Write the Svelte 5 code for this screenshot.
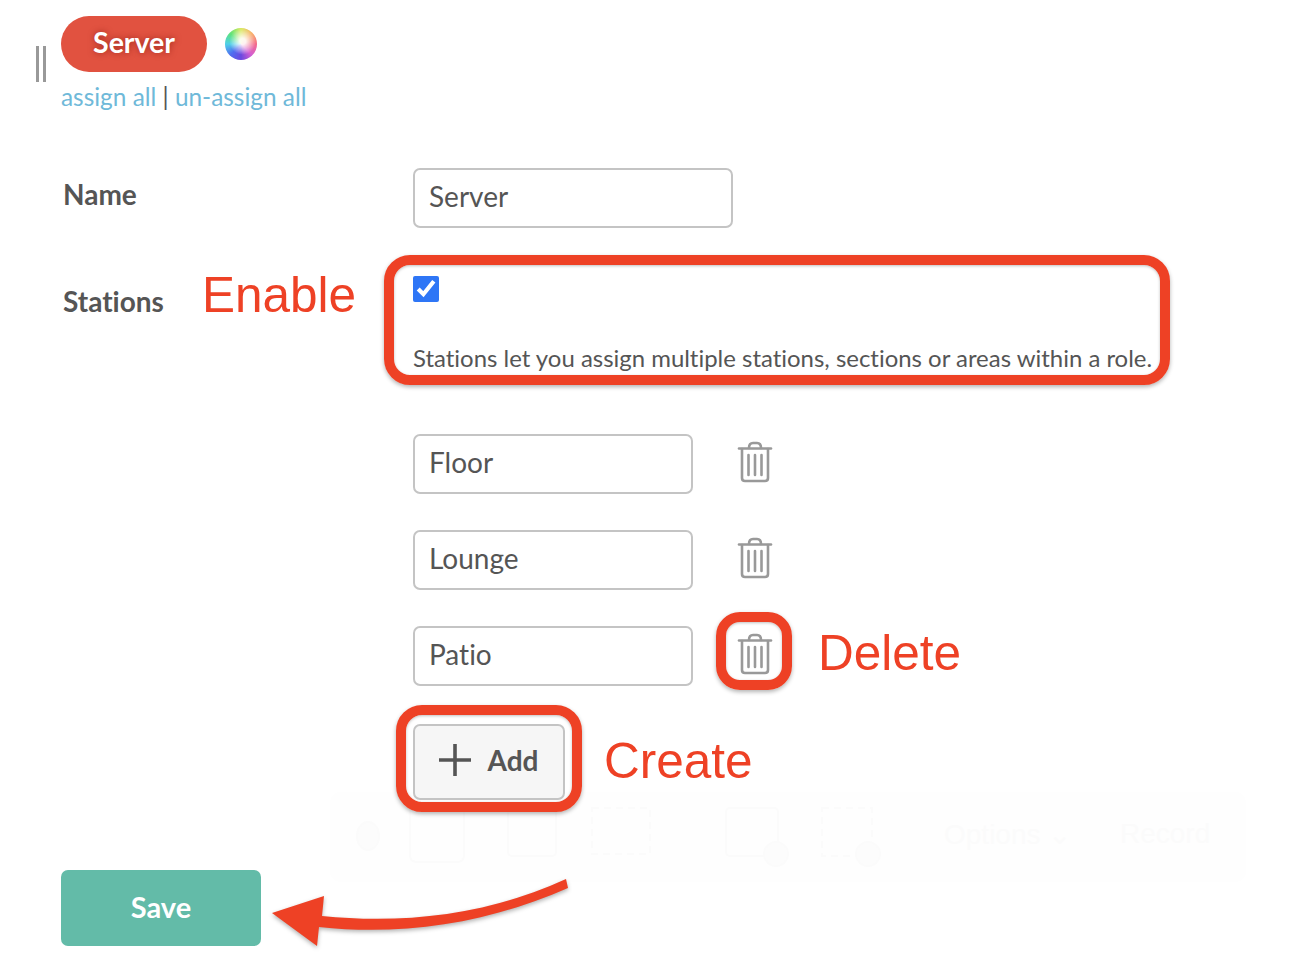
<script>
  const stations = ["Floor", "Lounge", "Patio"];
</script>

<main class="page">
  <span class="grip" aria-hidden="true"></span>

  <div class="role-head">
    <span class="pill">Server</span>
    <span class="swatch" aria-hidden="true"></span>
  </div>
  <p class="assign"><a href="#a">assign all</a> <span>|</span> <a href="#u">un-assign all</a></p>

  <form class="form">
    <label class="field-label name-label" for="role-name">Name</label>
    <input id="role-name" class="text-input role-input" type="text" value="Server" />

    <span class="field-label stations-label">Stations</span>
    <div class="stations">
      <input class="check" type="checkbox" checked aria-label="Enable stations" />
      <p class="help">Stations let you assign multiple stations, sections or areas within a role.</p>

      <div class="station-list">
        {#each stations as station}
          <div class="station-row">
            <input class="text-input station-input" type="text" value={station} />
            <button class="trash" type="button" aria-label="Delete {station}">
              <svg width="36" height="42" viewBox="0 0 36 42" fill="none" stroke="#999" stroke-width="2.6" stroke-linecap="round" stroke-linejoin="round">
                <path d="M2 7.5h32" />
                <path d="M12 7c0-3.5 1.500-5 4-5h4c2.500 0 4 1.500 4 5" />
                <path d="M5 8v29c0 2 1 3 3 3h20c2 0 3-1 3-3V8" />
                <path d="M11.500 14v20M18 14v20M24.500 14v20" />
              </svg>
            </button>
          </div>
        {/each}
      </div>

      <button class="add" type="button">
        <svg width="34" height="34" viewBox="0 0 34 34" stroke="#555" stroke-width="3.600"><path d="M17 1v32M1 17h32" /></svg>
        <span>Add</span>
      </button>
    </div>
  </form>

  <button class="save" type="button">Save</button>

  <!-- screen recorder toolbar, nearly invisible behind the screenshot -->
  <div class="ghost-bar" aria-hidden="true">
    <svg width="920" height="90" viewBox="0 0 920 90" fill="none" stroke="#fbfbfb" stroke-width="2">
      <ellipse cx="38" cy="44" rx="11" ry="14" fill="#fcfcfc" />
      <rect x="80" y="12" width="54" height="58" rx="6" />
      <rect x="178" y="18" width="48" height="46" rx="4" />
      <rect x="262" y="16" width="58" height="46" stroke-dasharray="7 5" />
      <rect x="396" y="16" width="52" height="48" rx="4" />
      <circle cx="446" cy="62" r="12" fill="#fcfcfc" />
      <rect x="492" y="16" width="50" height="48" stroke-dasharray="7 5" />
      <circle cx="538" cy="62" r="12" fill="#fcfcfc" />
    </svg>
    <span class="ghost-options">Options ⌄</span>
    <span class="ghost-record">Record</span>
  </div>

  <!-- annotations drawn on top of the screenshot -->
  <span class="ring ring-enable"></span>
  <span class="ring ring-delete"></span>
  <span class="ring ring-add"></span>
  <span class="note note-enable">Enable</span>
  <span class="note note-delete">Delete</span>
  <span class="note note-create">Create</span>

  <svg class="arrow" width="310" height="80" viewBox="0 0 310 80">
    <path d="M51 41 C130 49 215 41 295 4 L297 13 C215 49 130 61 48 52 L46 71 L1 38 L53 21 Z" fill="#ee4125" />
  </svg>
</main>

<style>
  :global(body) {
    margin: 0;
    background: #fff;
  }

  .page {
    position: relative;
    box-sizing: border-box;
    height: 970px;
    padding: 16px 0 0 61px;
    overflow: hidden;
    color: #555;
    font-family: Lato, "Liberation Sans", sans-serif;
    font-variant-ligatures: none;
  }

  .grip {
    position: absolute;
    top: 46px;
    left: 36px;
    box-sizing: content-box;
    width: 4px;
    height: 36px;
    border-right: 3px solid #999;
    border-left: 3px solid #999;
  }

  .role-head {
    display: flex;
    align-items: center;
    gap: 18px;
  }

  .pill {
    display: grid;
    box-sizing: border-box;
    width: 146px;
    height: 56px;
    padding-bottom: 4px;
    place-items: center;
    border-radius: 28px;
    color: #fff;
    background: #e15240;
    font-size: 28.5px;
    font-weight: 700;
    text-shadow: 0 0 6px rgba(120, 20, 10, 0.6);
  }

  .swatch {
    width: 32px;
    height: 32px;
    border-radius: 50%;
    background:
      radial-gradient(circle at 55% 42%, rgba(255, 255, 255, 0.9) 0 12%, rgba(255, 255, 255, 0) 52%),
      conic-gradient(#d8e85a, #f7a95a, #f46a8a, #d55fd0, #6a48e0, #4f6ff0, #4fd0e8, #5fe37a, #d8e85a);
    filter: blur(0.5px);
  }

  .assign {
    margin: 11px 0 0;
    color: #555;
    font-size: 24.4px;
    line-height: 28px;
  }

  .assign a {
    color: #6fb9d9;
    text-decoration: none;
  }

  .form {
    position: relative;
    z-index: 1;
    display: grid;
    grid-template-columns: 352px 1fr;
    row-gap: 48px;
    margin-top: 57px;
  }

  .field-label {
    margin-left: 2px;
    font-size: 28px;
    font-weight: 700;
  }

  .name-label {
    padding-top: 9px;
  }

  .stations-label {
    padding-top: 8px;
  }

  .text-input {
    display: block;
    box-sizing: border-box;
    height: 60px;
    padding: 0 14px 4px;
    border: 2px solid #c4c4c4;
    border-radius: 7px;
    color: #555;
    background: #fff;
    font: 400 28px Lato, "Liberation Sans", sans-serif;
    font-variant-ligatures: none;
  }

  .role-input {
    width: 320px;
  }

  .station-input {
    width: 280px;
  }

  .stations {
    min-width: 0;
  }

  .check {
    display: block;
    width: 26px;
    height: 26px;
    margin: 0;
    accent-color: #2e76f6;
  }

  .help {
    margin: 41px 0 0;
    font-size: 23.95px;
    line-height: 30px;
    white-space: nowrap;
  }

  .station-list {
    display: grid;
    gap: 36px;
    margin-top: 61px;
  }

  .station-row {
    display: flex;
    align-items: center;
    gap: 44px;
  }

  .trash {
    display: block;
    margin-bottom: 4px;
    padding: 0;
    border: 0;
    background: none;
  }

  .trash svg {
    display: block;
  }

  .add {
    display: flex;
    box-sizing: border-box;
    width: 152px;
    height: 76px;
    align-items: center;
    justify-content: center;
    gap: 16px;
    margin-top: 38px;
    padding: 0 2px 0 0;
    border: 2px solid #c4c4c4;
    border-radius: 7px;
    color: #555;
    background: #f6f6f6;
    font: 700 28px Lato, "Liberation Sans", sans-serif;
  }

  .add svg {
    margin-bottom: 4px;
  }

  .add span {
    margin-bottom: 4px;
  }

  .save {
    display: block;
    width: 200px;
    height: 76px;
    margin-top: 70px;
    padding: 0 0 4px;
    border: 0;
    border-radius: 7px;
    color: #fff;
    background: #63bba8;
    font: 700 29px Lato, "Liberation Sans", sans-serif;
  }

  .ghost-bar {
    position: absolute;
    top: 792px;
    left: 330px;
    width: 916px;
    height: 90px;
    border-radius: 10px;
    background: #fefefe;
    pointer-events: none;
  }

  .ghost-bar svg {
    position: absolute;
    top: 0;
    left: 0;
  }

  .ghost-options,
  .ghost-record {
    position: absolute;
    top: 26px;
    color: #fbfbfb;
    font: 400 28px "Liberation Sans", sans-serif;
  }

  .ghost-options {
    left: 614px;
  }

  .ghost-record {
    left: 790px;
  }

  .ring,
  .note,
  .arrow {
    z-index: 2;
  }

  .ring {
    position: absolute;
    box-sizing: border-box;
    border: 10px solid #ee4125;
    box-shadow: 0 2px 4px rgba(0, 0, 0, 0.3), inset 0 1px 3px rgba(0, 0, 0, 0.25);
  }

  .ring-enable {
    top: 255px;
    left: 384px;
    width: 786px;
    height: 130px;
    border-radius: 26px;
  }

  .ring-delete {
    top: 612px;
    left: 716px;
    width: 76px;
    height: 78px;
    border-radius: 24px;
  }

  .ring-add {
    top: 705px;
    left: 396px;
    width: 186px;
    height: 107px;
    border-radius: 26px;
  }

  .note {
    position: absolute;
    color: #ee4125;
    font-family: "Liberation Sans", Arial, sans-serif;
    font-size: 49.5px;
    line-height: 1;
    white-space: nowrap;
  }

  .note-enable {
    top: 270px;
    left: 202px;
  }

  .note-delete {
    top: 628px;
    left: 818px;
  }

  .note-create {
    top: 736px;
    left: 604px;
  }

  .arrow {
    position: absolute;
    top: 875px;
    left: 271px;
    filter: drop-shadow(0 2px 2px rgba(0, 0, 0, 0.3));
  }
</style>
